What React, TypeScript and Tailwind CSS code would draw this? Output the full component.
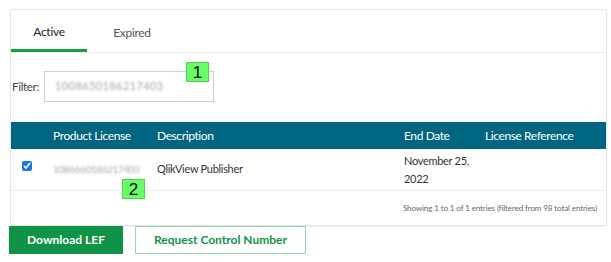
import { useState } from "react";

function Badge({ n }: { n: string }) {
  return (
    <span className="absolute flex h-[20px] w-[23px] items-center justify-center border border-[#4fd34f] bg-[#66ff66] font-['Liberation_Sans',sans-serif] text-[17px] leading-none tracking-normal text-black">
      {n}
    </span>
  );
}

export default function App() {
  const [tab, setTab] = useState("active");
  const [checked, setChecked] = useState(true);

  return (
    <div className="h-[262px] w-[611px] bg-white pl-[9px] pt-[9px] font-['Lato',sans-serif] text-[#333]">
      <div className="ml-px w-[597px] rounded-[3px] border border-[#e5e5e5] bg-white shadow-[0_1px_2px_rgba(0,0,0,0.06)]">
        <div className="flex h-[43px] border-b border-[#ececec]">
          <button
            type="button"
            onClick={() => setTab("active")}
            className={
              tab === "active"
                ? "w-[76px] border-b-[3px] border-[#1a9b48] pt-[4px] text-[12px] tracking-[-0.3px] text-[#222]"
                : "w-[76px] pt-[4px] text-[12px] tracking-[-0.3px] text-[#555]"
            }
          >
            Active
          </button>
          <button
            type="button"
            onClick={() => setTab("expired")}
            className={
              tab === "expired"
                ? "w-[90px] border-b-[3px] border-[#1a9b48] pt-[4px] text-[12px] tracking-[-0.3px] text-[#222]"
                : "w-[90px] pt-[4px] text-[12px] tracking-[-0.3px] text-[#555]"
            }
          >
            Expired
          </button>
        </div>

        <div className="flex items-center pl-[1px] pt-[18px] pb-[20px]">
          <span className="text-[11.5px] tracking-[-0.3px] text-[#444]">Filter:</span>
          <div className="relative ml-[5px]">
            <div className="flex h-[31px] w-[170px] items-center border border-[#cfcfcf] pl-[10px]">
              <span className="text-[11px] tracking-[0.4px] text-[#a5a5a5] blur-[0.8px]">
                1008650186217403
              </span>
            </div>
            <div className="absolute right-[5px] top-[-9px] h-[20px] w-[23px]">
              <Badge n="1" />
            </div>
          </div>
        </div>

        <div className="flex h-[27px] items-center bg-[#006580] text-[12px] tracking-[-0.4px] text-white">
          <div className="w-[42px]" />
          <div className="w-[104px]">Product License</div>
          <div className="w-[247px]">Description</div>
          <div className="w-[81px]">End Date</div>
          <div>License Reference</div>
        </div>

        <div className="flex h-[42px] items-center border-b border-[#ececec] text-[11px] tracking-[-0.3px] text-[#333]">
          <div className="flex w-[42px] justify-center self-start pr-[10px] pt-[12px]">
            <input
              type="checkbox"
              checked={checked}
              onChange={() => setChecked(!checked)}
              className="h-[10px] w-[10px] accent-[#1a73e8]"
            />
          </div>
          <div className="relative w-[104px]">
            <span className="text-[10px] tracking-[-0.4px] text-[#aaa] blur-[0.9px]">
              1086660186217403
            </span>
            <div className="absolute left-[69px] top-[18px] h-[20px] w-[23px]">
              <Badge n="2" />
            </div>
          </div>
          <div className="w-[247px]">QlikView Publisher</div>
          <div className="w-[81px] leading-[18px]">
            November 25,
            <br />
            2022
          </div>
          <div />
        </div>

        <div className="flex h-[34px] items-center justify-end pr-[9px] text-[8px] tracking-[-0.1px] text-[#666]">
          Showing 1 to 1 of 1 entries (filtered from 98 total entries)
        </div>
      </div>

      <div className="flex gap-[12px]">
        <button
          type="button"
          className="h-[28px] w-[114px] bg-[#0f9447] text-[12px] font-bold text-white"
        >
          Download LEF
        </button>
        <button
          type="button"
          className="h-[28px] w-[171px] border border-[#94d9ad] bg-white text-[12px] font-bold text-[#109446]"
        >
          Request Control Number
        </button>
      </div>
    </div>
  );
}
